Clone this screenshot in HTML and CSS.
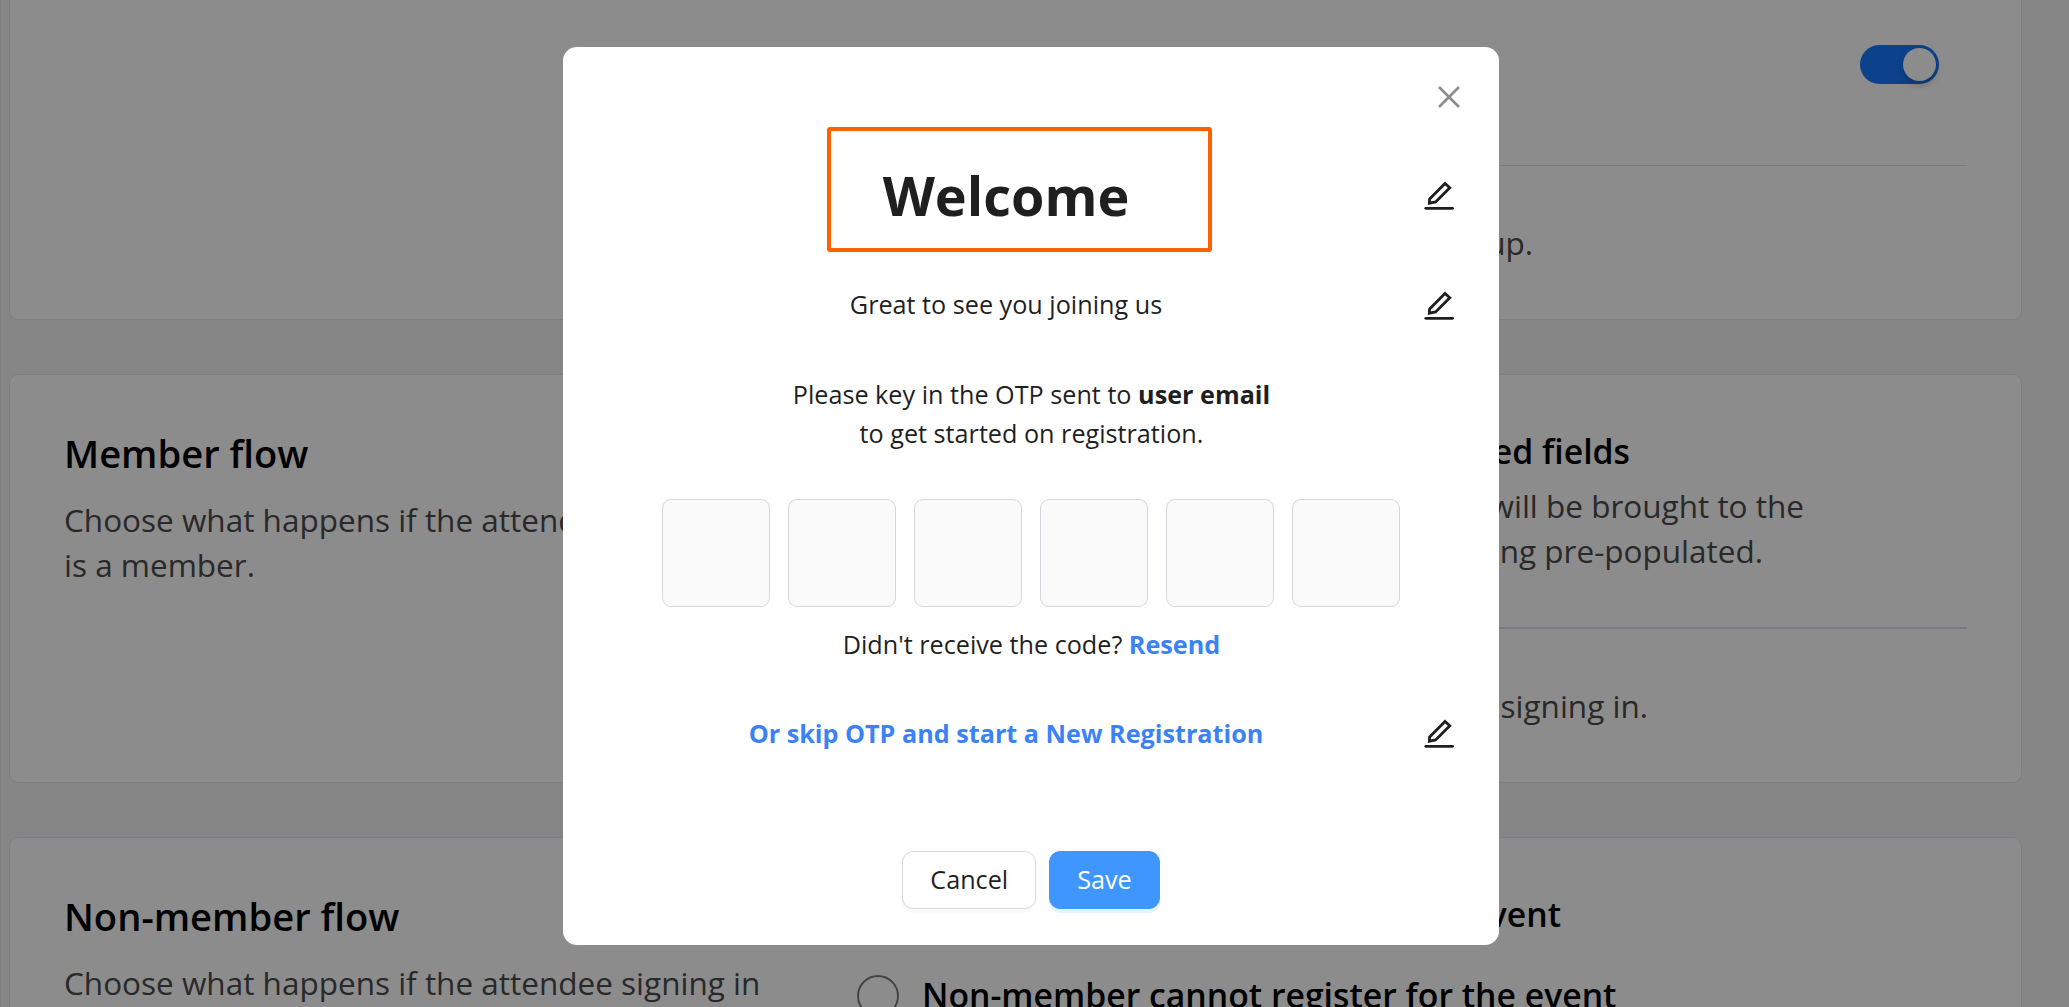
FILE: index.html
```
<!DOCTYPE html>
<html lang="en">

<head>
    <meta charset="UTF-8" />
    <meta name="viewport" content="width=device-width, initial-scale=1" />
    <title>Registration flow</title>
    <link rel="stylesheet" href="styles.css">
</head>

<body>
    <main class="page">
        <section class="card card-first">
            <div class="card-info"></div>
            <div class="card-options">
                <div class="toggle-row">
                    <span class="switch"><span class="switch-handle"></span></span>
                </div>
                <div class="divider"></div>
                <div class="option">
                    <p class="desc w-signup">Attendees can sign up.</p>
                </div>
            </div>
        </section>

        <section class="card card-member">
            <div class="card-info">
                <h2>Member flow</h2>
                <p class="desc">Choose what happens if the attendee signing in is a member.</p>
            </div>
            <div class="card-options">
                <div class="option">
                    <span class="radio"></span>
                    <div>
                        <h3 class="w-fields">Pre-populated fields</h3>
                        <p class="desc w-brought">Member will be brought to the</p>
                        <p class="desc w-populated">form with fields being pre-populated.</p>
                    </div>
                </div>
                <div class="divider thick"></div>
                <div class="option">
                    <p class="desc w-signing">Verify when signing in.</p>
                </div>
            </div>
        </section>

        <section class="card card-nonmember">
            <div class="card-info">
                <h2>Non-member flow</h2>
                <p class="desc">Choose what happens if the attendee signing in</p>
            </div>
            <div class="card-options">
                <div class="option">
                    <span class="radio"></span>
                    <h3 class="w-event">Non-member can register for event</h3>
                </div>
                <div class="option second">
                    <span class="radio"></span>
                    <h3>Non-member cannot register for the event</h3>
                </div>
            </div>
        </section>
    </main>

    <svg class="defs" aria-hidden="true">
        <symbol id="icon-edit" viewBox="0 0 32 32">
            <path d="M6.6 20 L22 4.4 L26.8 8.8 L12.6 23 L6.3 24.2 Z" fill="none" stroke="currentColor" stroke-width="2.8" />
            <path d="M2.8 29.3 H29.6" fill="none" stroke="currentColor" stroke-width="2.8" stroke-linecap="round" />
        </symbol>
    </svg>

    <div class="overlay">
        <div class="modal" role="dialog" aria-modal="true">
            <button class="close" aria-label="Close">
                <svg viewBox="0 0 22 22">
                    <path d="M1 1 L21 21 M21 1 L1 21" fill="none" stroke="currentColor" stroke-width="2.6" />
                </svg>
            </button>
            <div class="highlight"></div>

            <div class="row row-title">
                <h1>Welcome</h1>
                <svg class="edit"><use href="#icon-edit" /></svg>
            </div>
            <div class="row row-subtitle">
                <p>Great to see you joining us</p>
                <svg class="edit"><use href="#icon-edit" /></svg>
            </div>

            <p class="otp-text">Please key in the OTP sent to <b>user email</b><br>to get started on registration.</p>

            <div class="otp">
                <span class="otp-box"></span>
                <span class="otp-box"></span>
                <span class="otp-box"></span>
                <span class="otp-box"></span>
                <span class="otp-box"></span>
                <span class="otp-box"></span>
            </div>
            <p class="resend">Didn't receive the code? <a class="link">Resend</a></p>

            <div class="row row-skip">
                <p><a class="link">Or skip OTP and start a New Registration</a></p>
                <svg class="edit"><use href="#icon-edit" /></svg>
            </div>

            <div class="actions">
                <button class="btn">Cancel</button>
                <button class="btn btn-primary">Save</button>
            </div>
        </div>
    </div>
</body>

</html>
```
FILE: styles.css
```
* {
    box-sizing: border-box;
}

html,
body {
    height: 100%;
    overflow: hidden;
}

body {
    margin: 0;
    font-family: "Open Sans", sans-serif;
    font-size: 25.2px;
    line-height: 39px;
    color: #1f1f1f;
    background: #f5f5f5;
}

h1,
h2,
h3,
p {
    margin: 0;
}

/* page behind the dialog */
.page {
    height: 1007px;
    overflow: hidden;
    padding: 0 47px 0 8px;
    border-left: 1px solid #ebebeb;
}

.card {
    display: grid;
    grid-template-columns: 793px 1fr;
    padding: 52px 54px 0;
    margin-bottom: 54px;
    background: #fff;
    border: 1px solid #e2e4f5;
    border-radius: 9px;
}

.card-first {
    height: 340px;
    margin-top: -20px;
}

.card-member,
.card-nonmember {
    height: 409px;
}

.card-info {
    width: 715px;
    margin-top: -1px;
}

h2 {
    margin-bottom: 17px;
    font-size: 38.15px;
    font-weight: 600;
    line-height: 54px;
    color: #000;
}

h3 {
    font-size: 33.75px;
    font-weight: 600;
    line-height: 48px;
    color: #000;
    white-space: nowrap;
}

h3 + .desc {
    margin-top: 8px;
}

.desc {
    font-size: 31.5px;
    line-height: 45px;
    color: #4c4c4c;
}

.option {
    display: flex;
    gap: 24px;
}

.option > .desc:first-child {
    margin-left: 65px;
}

.option.second {
    margin-top: 33px;
}

.radio {
    flex: none;
    width: 42px;
    height: 42px;
    margin: 4px -1px 0 0;
    border: 2px solid #7a7a7a;
    border-radius: 50%;
}

.divider {
    height: 1px;
    background: #dfe1f5;
}

.divider.thick {
    height: 2px;
    margin: 54px 0;
    background: #dadff8;
}

.w-signup,
.w-fields,
.w-brought,
.w-populated,
.w-signing,
.w-event {
    text-align: right;
    white-space: nowrap;
}

.w-signup { width: 611px; }
.w-fields { width: 708px; }
.w-brought { width: 882px; }
.w-populated { width: 841px; }
.w-signing { width: 726px; }
.w-event { width: 639px; }

.toggle-row {
    display: flex;
    justify-content: flex-end;
    height: 132px;
    padding: 12px 28px 0 0;
}

.card-first .option {
    margin-top: 54px;
}

.switch {
    display: flex;
    justify-content: flex-end;
    width: 79px;
    height: 39px;
    padding: 3px;
    border-radius: 20px;
    background: #1677ff;
}

.switch-handle {
    width: 33px;
    height: 33px;
    border-radius: 50%;
    background: #fff;
    box-shadow: 0 4px 7px rgba(0, 35, 11, 0.25);
}

/* dialog */
.defs {
    position: absolute;
    width: 0;
    height: 0;
}

.overlay {
    position: fixed;
    inset: 0;
    padding: 47px 0 0 563px;
    background: rgba(0, 0, 0, 0.45);
}

.modal {
    position: relative;
    width: 936px;
    height: 898px;
    padding: 114px 42px 0 43px;
    background: #fff;
    border-radius: 14px;
}

.close {
    position: absolute;
    top: 39px;
    right: 39.5px;
    width: 22px;
    height: 22px;
    padding: 0;
    border: 0;
    background: none;
    color: #8c8c8c;
}

.close svg {
    display: block;
}

/* frame drawn around the title */
.highlight {
    position: absolute;
    top: 80px;
    left: 264px;
    width: 385px;
    height: 125px;
    border: 4px solid #ff6000;
    border-radius: 3px;
}

.row {
    display: flex;
    align-items: center;
}

.row h1,
.row p {
    flex: 1;
    text-align: center;
}

h1 {
    font-size: 54px;
    font-weight: 700;
    line-height: 68px;
}

.edit {
    width: 32px;
    height: 32px;
    margin: 0 2px 0 17px;
}

.row-subtitle {
    height: 42px;
    margin-top: 55px;
}

.row-subtitle p {
    padding-bottom: 1px;
}

.otp-text {
    margin-top: 49px;
    text-align: center;
}

.otp {
    display: flex;
    justify-content: center;
    gap: 18px;
    margin: 46px 1px 0 0;
}

.otp-box {
    width: 108px;
    height: 108px;
    border: 1px solid #d5d7dc;
    border-radius: 9px;
    background: #fafafa;
}

.resend {
    margin-top: 18px;
    text-align: center;
}

.link {
    font-weight: 700;
    color: #3b82f6;
}

.row-skip {
    margin-top: 50px;
}

.row-skip .edit {
    margin-bottom: 2px;
}

.actions {
    display: flex;
    justify-content: center;
    gap: 13px;
    margin: 98px 1px 0 0;
}

.btn {
    height: 58px;
    padding: 0 27px 2px;
    border: 1px solid #d9d9d9;
    border-radius: 11px;
    background: #fff;
    color: #1f1f1f;
    font: inherit;
    box-shadow: 0 4px 0 rgba(0, 0, 0, 0.02);
}

.btn-primary {
    border-color: #4096ff;
    background: #4096ff;
    color: #fff;
    box-shadow: 0 4px 0 rgba(5, 145, 255, 0.1);
}
```
